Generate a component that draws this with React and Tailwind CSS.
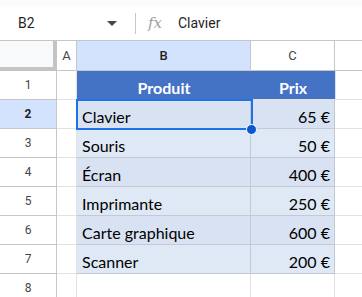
import React from 'react';

const rows = [
  { n: 3, name: 'Souris', price: '50 €', bg: 'bg-[#dfe9f6]' },
  { n: 4, name: 'Écran', price: '400 €', bg: 'bg-[#d9e2f3]' },
  { n: 5, name: 'Imprimante', price: '250 €', bg: 'bg-[#dfe9f6]' },
  { n: 6, name: 'Carte graphique', price: '600 €', bg: 'bg-[#d9e2f3]' },
  { n: 7, name: 'Scanner', price: '200 €', bg: 'bg-[#dfe9f6]' },
];

const cellFont = { fontFamily: 'Lato, "Noto Sans", sans-serif' };

function RowHead({ n, active }) {
  return (
    <div
      className={`h-[29px] flex items-center justify-center border-r border-b border-[#c4c7c5] text-[12px]
                  ${active ? 'bg-[#d3e3fd] font-bold text-[#1f1f1f]' : 'bg-white text-[#444746]'}`}
    >
      {n}
    </div>
  );
}

export default function App() {
  return (
    <div className="w-[362px] h-[297px] overflow-hidden bg-white font-['Roboto',sans-serif] relative">
      {/* top strip */}
      <div className="h-[6px] bg-[#f9fbfd]" />

      {/* formula bar */}
      <div className="h-[35px] flex items-center border-b border-[#c4c7c5] text-[14px] text-[#1f1f1f]">
        <span className="ml-[18px] w-[88px]">B2</span>
        <svg width="10" height="5" viewBox="0 0 10 5" className="ml-[1px]">
          <path d="M0 0 L10 0 L5 5 Z" fill="#444746" />
        </svg>
        <div className="ml-[18px] w-px h-[21px] bg-[#c4c7c5]" />
        <span className="ml-[12px] w-[18px] italic text-[#a0a0a0] font-['DejaVu_Serif',serif] text-[15px] leading-none">
          fx
        </span>
        <span className="ml-[12px]">Clavier</span>
      </div>

      {/* grid */}
      <div className="grid grid-cols-[57px_20px_174px_84px_27px]">
        {/* column header row */}
        <div className="h-[30px] bg-[#f8f9fa] border-r-4 border-b-4 border-[#c4c4c4]" />
        <div className="h-[30px] flex items-center justify-center border-r border-b border-[#c4c7c5] text-[13px] text-[#444746]">A</div>
        <div className="h-[30px] flex items-center justify-center border-r border-b border-[#c4c7c5] bg-[#d3e3fd] text-[13px] font-medium text-[#1f1f1f]">B</div>
        <div className="h-[30px] flex items-center justify-center border-r border-b border-[#c4c7c5] text-[13px] text-[#444746]">C</div>
        <div className="h-[30px] border-b border-[#c4c7c5]" />

        {/* row 1 */}
        <RowHead n={1} />
        <div className="h-[29px] border-r border-b border-[#e1e1e1]" />
        <div style={cellFont} className="h-[29px] col-span-2 grid grid-cols-[174px_84px] bg-[#4472c4] text-white font-bold text-[16px] leading-[18px] border-b border-[#e1e1e1]">
          <div className="flex items-end justify-center pb-[2px]">Produit</div>
          <div className="flex items-end justify-center pb-[2px]">Prix</div>
        </div>
        <div className="h-[29px] border-b border-[#e1e1e1] border-l" />

        {/* row 2 */}
        <RowHead n={2} active />
        <div className="h-[29px] border-r border-b border-[#e1e1e1]" />
        <div style={cellFont} className="h-[29px] flex items-end pb-[2px] pl-[5px] bg-[#d9e2f3] border-r border-b border-[#c3cad6] text-[16px] leading-[18px] text-black">Clavier</div>
        <div style={cellFont} className="h-[29px] flex items-end justify-end pb-[2px] pr-[4px] bg-[#d9e2f3] border-r border-b border-[#c3cad6] text-[16px] leading-[18px] text-black">65 €</div>
        <div className="h-[29px] border-b border-[#e1e1e1]" />

        {rows.map((r) => (
          <React.Fragment key={r.n}>
            <RowHead n={r.n} />
            <div className="h-[29px] border-r border-b border-[#e1e1e1]" />
            <div style={cellFont} className={`h-[29px] flex items-end pb-[2px] pl-[5px] ${r.bg} border-r border-b border-[#c3cad6] text-[16px] leading-[18px] text-black`}>{r.name}</div>
            <div style={cellFont} className={`h-[29px] flex items-end justify-end pb-[2px] pr-[4px] ${r.bg} border-r border-b border-[#c3cad6] text-[16px] leading-[18px] text-black`}>{r.price}</div>
            <div className="h-[29px] border-b border-[#e1e1e1]" />
          </React.Fragment>
        ))}

        {/* row 8 */}
        <RowHead n={8} />
        <div className="h-[29px] border-r border-b border-[#e1e1e1]" />
        <div className="h-[29px] border-r border-b border-[#e1e1e1]" />
        <div className="h-[29px] border-r border-b border-[#e1e1e1]" />
        <div className="h-[29px] border-b border-[#e1e1e1]" />
      </div>

      {/* selection on B2 */}
      <div className="absolute left-[76px] top-[99px] w-[177px] h-[31px] border-2 border-[#1a73e8] pointer-events-none" />
      <div className="absolute left-[246px] top-[124px] w-[11px] h-[11px] rounded-full bg-[#0b57d0] border border-white" />
    </div>
  );
}
